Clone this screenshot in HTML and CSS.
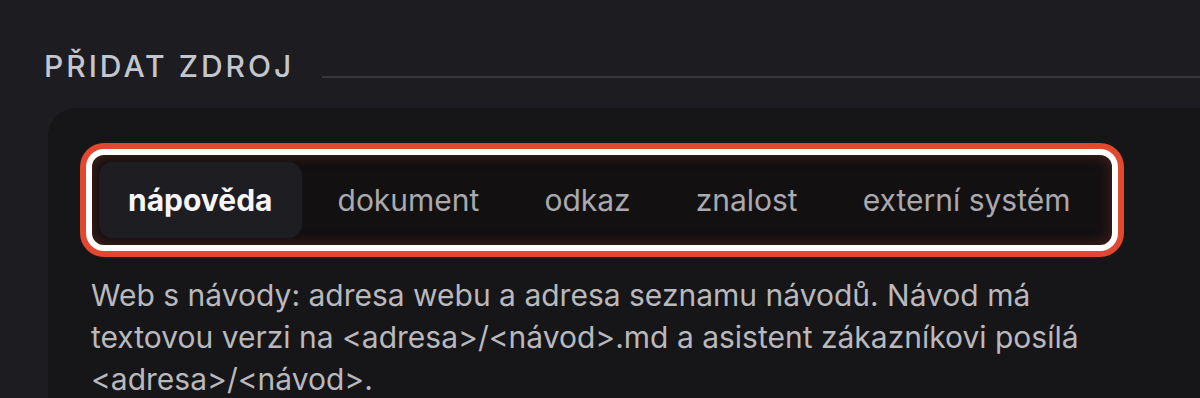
FILE: index.html
```html
<!DOCTYPE html>
<html lang="cs">
<head>
<meta charset="utf-8">
<title>Přidat zdroj</title>
<link rel="stylesheet" href="styles.css">
</head>
<body>
<div class="page">
  <div class="section-head">
    <h2 class="section-title">PŘIDAT ZDROJ</h2>
    <div class="section-rule"></div>
  </div>
  <div class="card">
    <div class="tabs">
      <div class="tab active">nápověda</div>
      <div class="tab">dokument</div>
      <div class="tab">odkaz</div>
      <div class="tab">znalost</div>
      <div class="tab">externí systém</div>
    </div>
    <p class="desc">Web s návody: adresa webu a adresa seznamu návodů. Návod má textovou verzi na &lt;adresa&gt;/&lt;návod&gt;.md a asistent zákazníkovi posílá &lt;adresa&gt;/&lt;návod&gt;.</p>
  </div>
</div>
</body>
</html>
```

FILE: styles.css
```css
html, body {
  margin: 0;
  padding: 0;
  background: #1d1c20;
  height: 100%;
  overflow: hidden;
}
body {
  font-family: Inter, "Noto Sans", sans-serif;
  color: #b8b8bc;
}
.page {
  padding: 48px 0 0 44px;
}
.section-head {
  display: flex;
  align-items: baseline;
  gap: 28px;
}
.section-title {
  margin: 0;
  font-size: 30px;
  line-height: 36px;
  font-weight: 500;
  letter-spacing: 3px;
  color: #c3c6cd;
  white-space: nowrap;
}
.section-rule {
  flex: 1;
  height: 2px;
  background: #38373c;
  position: relative;
  top: 1px;
}
.card {
  margin: 24px 0 0 4px;
  background: #161518;
  border-radius: 28px 0 0 0;
  padding: 47px 0 40px 44px;
  min-height: 400px;
}
.tabs {
  display: inline-flex;
  gap: 7px;
  padding: 7px 12px 7px 7px;
  border-radius: 12px;
  background: #131012;
  box-shadow:
    inset 0 0 14px rgba(190, 70, 45, 0.34),
    0 0 0 6px #ffffff,
    0 0 0 12px #e1482f;
}
.tab {
  padding: 0 29px;
  height: 76px;
  line-height: 76px;
  font-size: 30px;
  color: #a9a9ae;
  border-radius: 14px;
  white-space: nowrap;
}
.tab.active {
  background: #1e1d21;
  color: #f6f6f8;
  font-weight: 700;
}
.desc {
  margin: 29px 0 0 -1px;
  max-width: 1030px;
  font-size: 30px;
  line-height: 42px;
  color: #b9b9bd;
}
```
